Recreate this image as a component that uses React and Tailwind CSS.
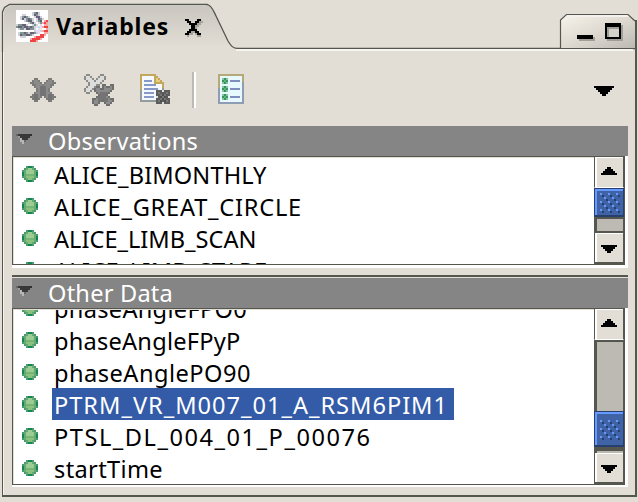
import { useLayoutEffect, useRef, useState } from "react";

const FONT = "font-['Noto_Sans','Open_Sans',sans-serif]";

/* Text whose letter spacing is adjusted so that it spans a given width. */
function Label({ text, width, className = "" }) {
  const ref = useRef(null);
  const [spacing, setSpacing] = useState(0);
  useLayoutEffect(() => {
    const natural = ref.current.getBoundingClientRect().width - spacing * text.length;
    setSpacing((width - natural) / text.length);
  }, [text, width]);
  return (
    <span ref={ref} className={`inline-block whitespace-pre ${className}`} style={{ letterSpacing: spacing }}>
      {text}
    </span>
  );
}

/* Bitmap icon: each character is one square cell of the given palette. */
function Pixels({ rows, palette, size = 2, className = "" }) {
  const w = Math.max(...rows.map((r) => r.length));
  return (
    <svg
      className={`block shrink-0 ${className}`}
      width={w * size}
      height={rows.length * size}
      viewBox={`0 0 ${w} ${rows.length}`}
      shapeRendering="crispEdges"
    >
      {rows.flatMap((row, y) =>
        [...row].map((c, x) =>
          palette[c] ? <rect key={`${x}-${y}`} x={x} y={y} width="1" height="1" fill={palette[c]} /> : null
        )
      )}
    </svg>
  );
}

const CROSS = [
  "..oo.....oo..",
  ".ommo...ommo.",
  "oommmo.ommmoo",
  ".oommmommmoo.",
  "..ommdddmmo..",
  "...omdddmo...",
  "...omdddmo...",
  "..ommdddmmo..",
  ".oddmdddmddo.",
  "ooddmo.omddoo",
  ".oddo...oddo.",
  "..oo.....oo..",
];
const GREY = { o: "#7b7b79", m: "#8b8b8b", d: "#737373" };

const DOUBLE_CROSS = [
  ".oo.....oo.....",
  "owwo...owwo....",
  "owwwo.owwwo....",
  ".owwwowwwo.....",
  "..owwwwwo......",
  "..owwwoo.xx..xx",
  ".owwwoxx.xmxxmx",
  "owwwoxmmxxmmmmx",
  "owwo.xmmmmmmmx.",
  ".oo...xmddddx..",
  ".......xdddx...",
  "......xddddmx..",
  "....xxmdddddmxx",
  "....xmmddxddmmx",
  "....xmmx..xmmx.",
  ".....xx....xx..",
];
const DOUBLE = { o: "#8c8c86", w: "#dcdcdc", x: "#6e6e6e", m: "#8b8b8b", d: "#747474" };

const DOCUMENT = [
  "gggggggg.......",
  "gwwwwwwgg......",
  "gwwwwwwgyg.....",
  "gwbbbbwgyyg....",
  "gwwwwwwggggg...",
  "gwbbbbbbwwwg...",
  "gwwwwwwwwwwg...",
  "gwbbbbbbbwws...",
  "swwwwwwwkkk.kkk",
  "swbbbbbwklkkklk",
  "swwwwwwwkkldlkk",
  "swbbbbbw.kdldk.",
  "swwwwwwwkkldlkk",
  "sssssssskldkdlk",
  "........kkk.kkk",
];
const DOC = {
  g: "#c3a85c", w: "#f4f8ff", y: "#e8cd80", b: "#8799c9",
  s: "#939c9e", k: "#5c5c5c", l: "#777777", d: "#505050",
};

const CHECKLIST = [
  "ggggggggggggg",
  "gwwwwwwwwwwwg",
  "gwaeawwwwwwwg",
  "gwedewbbbbbwg",
  "gwaeawwwwwwws",
  "gwwwwwwwwwwws",
  "gwaeawwwwwwws",
  "swedewbbbbbws",
  "swaeawwwwwwws",
  "swwwwwwwwwwws",
  "swaeawwwwwwws",
  "swedewbbbbbws",
  "swaeawwwwwwws",
  "swwwwwwwwwwws",
  "sssssssssssss",
];
const CHECK = { g: "#b5aa77", w: "#e8f9fe", a: "#83c7a0", e: "#36945c", d: "#5fb47e", b: "#7e8dbc", s: "#8d9db3" };

const BULLET = [
  "..abba..",
  ".acddca.",
  "acddddca",
  "bcddddcb",
  "bceeeecb",
  "acffffca",
  ".acffca.",
  "..abba..",
];
const GREEN = { a: "#4b9b70", b: "#148653", c: "#65aa70", d: "#9ccc94", e: "#78b475", f: "#8bc17f" };

const CLOSE = [
  "kk....kk.",
  ".kk..kkss",
  "..kkkkss.",
  "...kkss..",
  "...kks...",
  "..kkkk...",
  ".kksskk..",
  "kkss.skk.",
  ".s....ss.",
];

const TWISTIE = [
  "cdddddde",
  ".bddddd.",
  "..addd..",
  "..aac...",
  "...a....",
];
const TW = { a: "#b7b7b7", b: "#999999", c: "#686868", d: "#383838", e: "#303030" };

const LOGO = [
  "wwwwwwwwwwwwwwww",
  "wwwwwwwwlgdlwwww",
  "wwwllwwwldglwwww",
  "wwlgdglwwlddlwww",
  "wwldlgdglwldglww",
  "wwwwlgddlwlgdwpr",
  "wwwwwwlgdlwlgprp",
  "lggddlwwlglwvwpp",
  "gddgddgdglvcvprr",
  "wlgglddgglwvywwp",
  "wwwwwwwwwlvvlprr",
  "wlggdglddglvwwpp",
  "wldggddglwwwrrpw",
  "wwlllwwwwprrrrww",
  "wwwwwwwprrrrpwww",
  "wwwwwwwrrrpwwwww",
];
const LOGO_COLORS = {
  w: "#ffffff", l: "#d0d3dc", g: "#7f958f", d: "#686079",
  r: "#f04444", p: "#f9a8a8", v: "#ecd9f8", c: "#b5e6ea", y: "#f5edc4",
};

function Arrow({ down = false }) {
  return (
    <svg width="16" height="8" viewBox="0 0 8 4" shapeRendering="crispEdges" className="block">
      <path d={down ? "M0 0h8v1h-1v1h-1v1h-1v1h-2v-1h-1v-1h-1v-1h-1z" : "M3 0h2v1h1v1h1v1h1v1h-8v-1h1v-1h1v-1h1z"} fill="#000" />
    </svg>
  );
}

function Thumb({ className }) {
  return (
    <div className={`w-[30px] shrink-0 border border-b-2 border-[#263f6c] bg-[#3f63a5] ${className}`}>
      <div className="flex h-full items-center justify-center border-t-2 border-l-2 border-[#6699ff]">
        <svg width="20" height="20" viewBox="0 0 10 10" shapeRendering="crispEdges">
          {[0, 4, 8].map((y) =>
            [0, 4, 8].map((x) => (
              <g key={`${x}-${y}`}>
                <rect x={x} y={y} width="1" height="1" fill="#6699ff" />
                <rect x={x + 1} y={y + 1} width="1" height="1" fill="#263f6c" />
              </g>
            ))
          )}
          {[2, 6].map((y) =>
            [2, 6].map((x) => (
              <g key={`${x}-${y}`}>
                <rect x={x} y={y} width="1" height="1" fill="#6699ff" />
                <rect x={x + 1} y={y + 1} width="1" height="1" fill="#263f6c" />
              </g>
            ))
          )}
        </svg>
      </div>
    </div>
  );
}

const TRACK = "border-l-[3px] border-r border-[#55564e] bg-[#bdbab3]";

function Scrollbar({ upper, thumb, lower, top, bottom }) {
  return (
    <div className="flex w-[31px] shrink-0 flex-col border-r border-[#55564e]">
      <div className={`flex shrink-0 justify-center border-l border-r border-[#55564e] bg-[#e2ded6] ${top}`}>
        <div className="flex w-full justify-center border-t border-l-2 border-white pt-[9px] pr-[2px]">
          <Arrow />
        </div>
      </div>
      <div className={`shrink-0 ${TRACK} ${upper}`} />
      <Thumb className={thumb} />
      <div className={`shrink-0 ${TRACK} ${lower}`} />
      <div className={`flex shrink-0 border-b-2 border-l border-r border-[#55564e] bg-[#e2ded6] ${bottom}`}>
        <div className="flex w-full justify-center border-t border-l-2 border-white pt-[11px] pr-[2px]">
          <Arrow down />
        </div>
      </div>
    </div>
  );
}

function Row({ text, width, selected = false }) {
  return (
    <div className="flex h-8 shrink-0 items-center pl-2">
      <Pixels rows={BULLET} palette={GREEN} />
      <div className={`ml-[14px] flex h-8 items-center pr-[6px] pl-[2px] ${selected ? "bg-[#335ba8] text-white" : "text-black"}`}>
        <Label text={text} width={width} className="pt-[2px] text-[23.6px] leading-[30px]" />
      </div>
    </div>
  );
}

function Header({ text, width }) {
  return (
    <div className="flex h-[30px] shrink-0 items-start bg-[#858585] pl-1 text-white">
      <Pixels rows={TWISTIE} palette={TW} className="mt-2" />
      <Label text={text} width={width} className="ml-4 text-[23.6px] leading-[31px]" />
    </div>
  );
}

export default function App() {
  return (
    <div className={`h-[502px] w-[638px] overflow-hidden bg-[#e2ded6] ${FONT}`}>
      <div className="relative h-[49px]">
        <svg className="absolute inset-0" width="638" height="52" viewBox="0 0 638 52" fill="none">
          <defs>
            <linearGradient id="tab" x1="0" y1="0" x2="0" y2="1">
              <stop offset="0" stopColor="#c9c6bf" />
              <stop offset="1" stopColor="#e2ded6" />
            </linearGradient>
            <linearGradient id="buttons" x1="0" y1="0" x2="1" y2="1">
              <stop offset="0" stopColor="#f6f3e9" />
              <stop offset="0.5" stopColor="#dedad2" />
              <stop offset="1" stopColor="#bcb9b2" />
            </linearGradient>
          </defs>
          <path d="M3 48V11q1-6 8-6H207c7 1 8 7 24 43z" fill="url(#tab)" />
          <path d="M3.5 52V12q1-6 7-6.5H206" stroke="#f5f3ef" />
          <path d="M2.5 52V12L4.500 7.500L9.500 4.500H207.500C212 6 213 10 216 16L228 41C231 46 233 48.500 238 48.500H636" stroke="#55564e" strokeWidth="1.3" />
          <path d="M561 48V20l5-5h62l7 6v27z" fill="url(#buttons)" />
          <path d="M562 22l5-6h62" stroke="#f3f0ed" strokeWidth="2" />
          <path d="M560.500 48V20L566.500 14.500H628L635 21" stroke="#55564e" strokeWidth="1.2" />
          <path d="M635 20h2v32h-2z" fill="#55564e" />
          <path d="M236 49h397v2H236z" fill="#f7f5ef" />
          <path d="M579 37h16v4h-16zM607 25h16v16h-16z" fill="#a19e98" />
          <path d="M577 35h16v4h-16zM605 23h16v16h-16z" fill="#000" />
          <path d="M607 27h12v10h-12z" fill="#d4d1ca" />
          <path d="M607 27h12v2h-10v8h-2z" fill="#a19e98" />
        </svg>
        <div className="relative flex pt-[10px] pl-4">
          <Pixels rows={LOGO} palette={LOGO_COLORS} />
          <Label text="Variables" width={113} className="ml-2 text-[23px] leading-[33px] font-bold" />
          <Pixels rows={CLOSE} palette={{ k: "#000", s: "#a5a29b" }} className="mt-[9px] ml-4" />
        </div>
      </div>

      <div className="ml-[2px] h-[448px] w-[635px] border-r-2 border-b-2 border-l border-[#55564e]">
        <div className="h-full border-l border-[#f5f3ef] pr-[7px] pl-2">
          <div className="flex h-[77px] items-start pl-[18px] pt-[25px]">
            <Pixels rows={CROSS} palette={GREY} className="mt-1" />
            <Pixels rows={DOUBLE_CROSS} palette={DOUBLE} className="ml-[28px]" />
            <Pixels rows={DOCUMENT} palette={DOC} className="ml-[26px]" />
            <div className="-mt-[2px] ml-[22px] h-9 w-1 border-r-2 border-l-2 border-r-white border-l-[#bdbab3]" />
            <Pixels rows={CHECKLIST} palette={CHECK} className="ml-[22px]" />
            <svg className="mt-3 ml-[350px] block" width="20" height="10" viewBox="0 0 10 5" shapeRendering="crispEdges">
              <path d="M0 0h10v1h-1v1h-1v1h-1v1h-1v1h-2v-1h-1v-1h-1v-1h-1v-1h-1z" fill="#000" />
            </svg>
          </div>

          <Header text="Observations" width={150} />
          <div className="flex h-[112px] w-[616px] border-r-[3px] border-b-[3px] border-white">
            <div className="flex w-full overflow-hidden border-t border-b border-l border-[#55564e] bg-white">
              <div className="flex grow flex-col overflow-hidden border-t border-l border-[#e2ded6]">
                <Row text="ALICE_BIMONTHLY" width={212.5} />
                <Row text="ALICE_GREAT_CIRCLE" width={248} />
                <Row text="ALICE_LIMB_SCAN" width={202.5} />
                <Row text="ALICE_LIMB_STARE" width={213.5} />
              </div>
              <Scrollbar
                top="h-[31px] border-b border-b-white"
                upper="h-0"
                thumb="h-[29px]"
                lower="h-4 border-t-2 border-b-2"
                bottom="h-[31px]"
              />
            </div>
          </div>

          <div className="mt-[7px] h-[3px] border-t-2 border-b border-t-[#55564e] border-b-[#e2ded6]" />
          <Header text="Other Data" width={125} />
          <div className="flex h-[179px] w-[616px] border-r-[3px] border-b-2 border-white">
            <div className="flex w-full overflow-hidden border-t border-b border-l border-[#55564e] bg-white">
              <div className="flex grow flex-col overflow-hidden border-t border-l border-[#e2ded6]">
                <div className="-mt-[18px] flex shrink-0 flex-col">
                  <Row text="phaseAngleFPO0" width={193} />
                  <Row text="phaseAngleFPyP" width={186.5} />
                  <Row text="phaseAnglePO90" width={197} />
                  <Row text="PTRM_VR_M007_01_A_RSM6PIM1" width={394} selected />
                  <Row text="PTSL_DL_004_01_P_00076" width={317.5} />
                  <Row text="startTime" width={109} />
                </div>
              </div>
              <Scrollbar
                top="h-[31px] border-b border-b-white"
                upper="h-[71px] border-t-2"
                thumb="h-9"
                lower="h-[6px] border-t-4"
                bottom="h-[31px]"
              />
            </div>
          </div>
        </div>
      </div>
    </div>
  );
}
